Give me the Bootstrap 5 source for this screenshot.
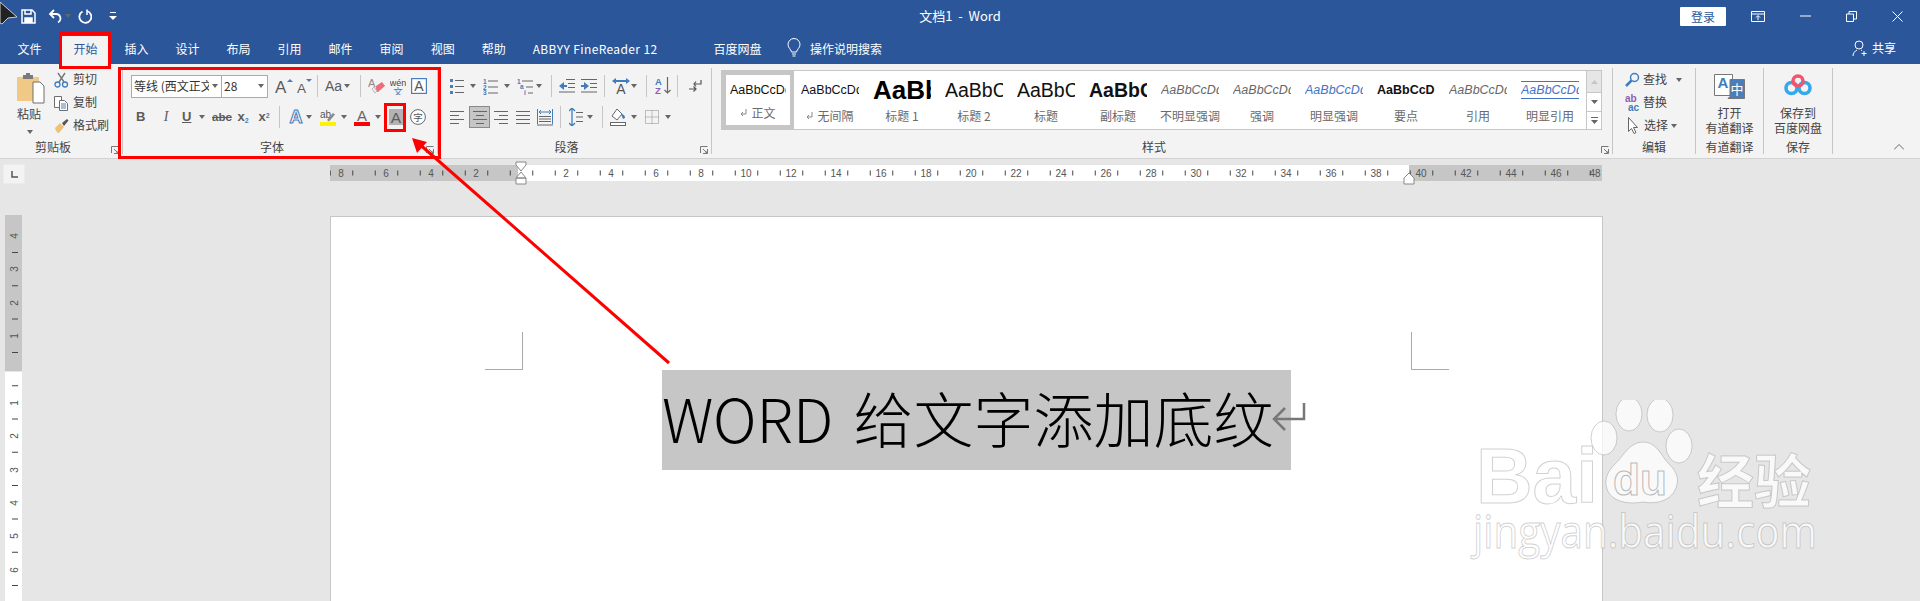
<!DOCTYPE html>
<html lang="zh-CN">
<head>
<meta charset="utf-8">
<title>文档1 - Word</title>
<link href="https://cdn.jsdelivr.net/npm/bootstrap@5.3.0/dist/css/bootstrap.min.css" rel="stylesheet">
<style>
html,body{height:601px;overflow:hidden}
body{background:#e6e6e6;font:12px/1.2 "Noto Sans CJK SC","Noto Sans",sans-serif;color:#444;position:relative}
svg{display:block;flex:none}
.title-bar{background:#2b579a;height:64px;color:#fff}
.t-row1{height:36px;padding-bottom:4px}
.t-side{flex:1 1 0}
.t-side-r{padding-left:21px}
.t-title{font-size:13px;white-space:pre;flex:none}
.qa{padding-left:21px}
.login{background:#fff;color:#2b579a;width:46px;height:19px;line-height:19px;text-align:center;border-radius:1px}
.ms-25{margin-left:25px}.ms-35{margin-left:35px}.me-17{margin-right:17px}
.t-row2{height:28px}
.tabs .nav-link{color:#fff;padding:0 13.5px;height:28px;line-height:25px;font-size:12px}
.tabs .nav-link.active{background:#f3f3f3;color:#2b579a;margin-left:5px}
.tabs .nav-link.search{height:24px;padding:0;margin:0}
.abbyy{letter-spacing:.38px}
.ms-baidu{margin-left:29px}
.ribbon{background:#f3f3f3;height:95px;border-bottom:1px solid #d2d2d2;padding-top:4px;color:#444}
.grp{height:86px;border-right:1px solid #c6c6c6;display:flex;flex-direction:column;flex:none}
.g1{width:123px}.g2{width:315px}.g3{width:274px}.g4{width:901px}.g5{width:83px}.g6{width:68px}.g7{width:69px}
.g-body{flex:1 1 auto;min-height:0}
.g-lab{display:flex;height:14px;line-height:14px;color:#444;flex:none}
.g-lab>b{flex:1 1 auto;text-align:center;font-weight:400}
.launch{width:16px;padding:6px 0 0 5px}
.row24{height:24px;display:flex;align-items:center}
.r1{margin-top:6px}.r2{margin-top:7px}
.pl8{padding-left:8px}.pl12{padding-left:12px}.pl13{padding-left:13px}
.m1{margin-left:1px}.m2{margin-left:2px}.m3{margin-left:3px}.m4{margin-left:4px}.m5{margin-left:5px}.m6{margin-left:6px}.m7{margin-left:7px}.m8{margin-left:8px}.m9{margin-left:9px}.m10{margin-left:10px}.m12{margin-left:12px}.m17{margin-left:17px}
.w8{width:8px}.w9{width:9px}.w10{width:10px}.w12{width:12px}.w14{width:14px}.w16{width:16px}.w18{width:18px}
.rb{flex:none;text-align:center;color:#5c5c5c;font-family:"Liberation Sans",sans-serif;line-height:16px;white-space:nowrap}
.rb-aa{font-size:14px}
.rb-b{font-weight:700;font-size:13px}
.rb-i{font-style:italic;font-size:14px;font-family:"Liberation Serif",serif}
.rb-s{text-decoration:line-through;font-size:11.5px;font-weight:700}
.rb-u{text-decoration:underline;font-size:13px;font-weight:700}
.rb sub,.rb sup{font-size:7px;color:#4a7ebb}
.cr{flex:none;display:flex;justify-content:center}
.cr::before{content:"";border:3px solid transparent;border-top:4px solid #666;border-bottom:0}
.vs{flex:none;width:1px;height:22px;background:#c6c6c6}
.cb{background:#fff;border:1px solid #ababab;height:23px;padding-left:2px;display:flex;align-items:center;flex:none;color:#333}
.cb1{width:91px}.cb2{width:46px;border-left:0}
.cb-text{flex:1 1 auto;overflow:hidden;white-space:nowrap}
.clip-col{padding-left:17px;width:51px}
.clip-paste{margin-top:5px}
.clip-txt{margin-top:2px}
.clip-cr{margin-top:9px}
.clip-list{margin-left:3px}
.clip-row{height:23px;display:flex;align-items:center;gap:4px;color:#444;white-space:nowrap}
.center-on{background:#c6c6c6;border:1px solid #8a8a8a;width:21px;height:22px;flex:none;display:flex;align-items:center;justify-content:center}
.gallery{margin:2px 0 0 9px;width:881px;height:60px;background:#fff;border:1px solid #c6c6c6;display:flex}
.st{width:72px;flex:none;display:flex;flex-direction:column;align-items:center;height:58px;color:#6a6a6a;border:4px solid transparent}
.st.sel{border-color:#c6c6c6}
.st-p{width:58px;height:30px;line-height:30px;overflow:hidden;white-space:nowrap;color:#111;font-family:"Liberation Sans",sans-serif;font-size:12.5px;text-align:left}
.sel .st-p{width:56px}
.st-l{height:18px;line-height:18px;margin-top:3px;display:flex;align-items:center;gap:4px}
.sel .st-l{margin-top:-1px}
.p-b{font-weight:700}.p-i{font-style:italic;color:#666;font-size:12.5px}.p-blue{color:#4472c4}
.p-h1{font-size:26px;font-weight:700;color:#000}.p-h2{font-size:19.5px}
.p-q{border-top:1px solid #4472c4;border-bottom:1px solid #4472c4;line-height:17px;height:19px;margin-top:6px;margin-bottom:5px}
.scroll{width:15px;flex:none;display:flex;flex-direction:column;border-left:1px solid #c6c6c6}
.scroll span{flex:1 1 0;display:flex;align-items:center;justify-content:center;background:#fff;border-bottom:1px solid #c6c6c6}
.scroll span:first-child{background:#e6e6e6;flex:1.2 1 0}
.scroll span:last-child{border:0}
.edit-col{padding-left:12px}
.edit-row{height:23px;display:flex;align-items:center;white-space:nowrap}
.big{display:flex;flex-direction:column;align-items:center;padding-top:6px;line-height:15px}
.big svg{margin-bottom:6px}
.ruler-row{display:flex;padding-left:3px;height:26px;margin-top:2px}
.corner{width:22px;height:20px;background:#f3f3f3;border:1px solid #ececec;margin-top:3px;flex:none;display:flex;align-items:center;justify-content:center}
.ruler-svg{margin-left:305px}
.doc-row{display:flex;padding-left:5px;margin-top:28px;height:386px}
.page{margin-left:308px;margin-top:1px;width:1273px;height:386px;background:#fff;border:1px solid #c6c6c6;border-bottom:0;padding-top:115px;flex:none}
.crops{display:flex;padding:0 153px 0 154px;height:38px}
.crop{width:38px;height:38px;flex:none;border-bottom:1px solid #aaa}
.crop.l{border-right:1px solid #aaa}
.crop.r{border-left:1px solid #aaa}
.hl{margin-left:331px;width:629px;height:100px;background:#c6c6c6;color:#000;font-size:60px;word-spacing:7px;line-height:94px;font-weight:300;white-space:nowrap;position:relative;font-family:"Noto Sans CJK SC","Noto Sans",sans-serif}
.pmark{position:absolute;left:610px;top:33px}
.overlay{position:absolute;pointer-events:none}
.box{border:3px solid #f00}
.b-tab{left:59px;top:32px;width:52px;height:37px}
.b-font{left:118px;top:67px;width:323px;height:92px}
.b-shade{left:384px;top:103px;width:22px;height:29px}
.arrow,.cursor{left:0;top:0}
.wm{left:1470px;top:400px}
</style>
</head>
<body>
<header class="title-bar">
  <div class="t-row1 d-flex align-items-center">
    <div class="t-side d-flex align-items-center qa">
      <svg width="15" height="15" viewBox="0 0 15 15" fill="none" stroke="#fff" stroke-width="1.5"><path d="M1 1h10l3 3v10H1z"/><path d="M4 1v4h6V1"/><path d="M4 14V9h7v5" fill="#fff"/></svg>
      <svg class="m12" width="14" height="15" viewBox="0 0 14 15" fill="none" stroke="#fff" stroke-width="1.8"><path d="M6 1 2 5l4 4M2 5h6a4.5 4.5 0 0 1 2 8.5"/></svg>
      <span class="cr w8 m2"></span>
      <svg class="m6" width="14" height="15" viewBox="0 0 14 15" fill="none" stroke="#fff" stroke-width="1.8"><path d="M4.5 2.5A6 6 0 1 0 9 2"/><path d="M9 .5V6" stroke-width="1.5"/></svg>
      <svg class="m17" width="8" height="9" viewBox="0 0 8 9" fill="#fff"><path d="M1 0h6v1H1zM0 4h8L4 8z"/></svg>
    </div>
    <div class="t-title">文档1  -  Word</div>
    <div class="t-side t-side-r d-flex align-items-center justify-content-end">
      <span class="login">登录</span>
      <svg class="ms-25" width="14" height="11" viewBox="0 0 14 11" fill="none" stroke="#fff"><path d="M.5.500h13v10H.5zM.5 3h13M7 9V5M5 6.500 7 4.500l2 2"/></svg>
      <svg class="ms-35" width="11" height="3" viewBox="0 0 11 3"><path d="M0 1h11" stroke="#fff"/></svg>
      <svg class="ms-35" width="11" height="11" viewBox="0 0 11 11" fill="none" stroke="#fff"><path d="M.5 3h7v7.500h-7zM3 3V.5h7.500V8H8"/></svg>
      <svg class="ms-35 me-17" width="11" height="11" viewBox="0 0 11 11" stroke="#fff"><path d="m.5.500 10 10m0-10-10 10"/></svg>
    </div>
  </div>
  <div class="t-row2 d-flex align-items-start">
    <nav class="nav tabs ps-1 flex-nowrap">
      <a class="nav-link" href="#">文件</a>
      <a class="nav-link active" href="#">开始</a>
      <a class="nav-link" href="#">插入</a>
      <a class="nav-link" href="#">设计</a>
      <a class="nav-link" href="#">布局</a>
      <a class="nav-link" href="#">引用</a>
      <a class="nav-link" href="#">邮件</a>
      <a class="nav-link" href="#">审阅</a>
      <a class="nav-link" href="#">视图</a>
      <a class="nav-link" href="#">帮助</a>
      <a class="nav-link abbyy" href="#">ABBYY FineReader 12</a>
      <a class="nav-link ms-baidu" href="#">百度网盘</a>
      <a class="nav-link search d-flex align-items-center gap-2" href="#"><svg class="m12" width="14" height="20" viewBox="0 0 14 20" fill="none" stroke="#fff"><path d="M4.500 14C4 11 1 10 1 6.500a6 6 0 0 1 12 0C13 10 10 11 9.500 14zM5 16h4M5.500 18h3"/></svg><span class="m1">操作说明搜索</span></a>
    </nav>
    <div class="ms-auto d-flex align-items-center me-4 gap-1 pt-1">
      <svg width="16" height="17" viewBox="0 0 16 17" fill="none" stroke="#fff"><circle cx="7" cy="5" r="4"/><path d="M1 16c0-3 2-5 4-6M9 10l1 .5M12 11v5M9.500 13.500h5"/></svg><span>共享</span>
    </div>
  </div>
</header>

<section class="ribbon d-flex">
  <div class="grp g1">
    <div class="g-body d-flex">
      <div class="clip-col d-flex flex-column">
        <svg class="clip-paste" width="28" height="32" viewBox="0 0 28 32"><path d="M0 4h22v24H0z" fill="#f0c987"/><path d="M6 2h10v4H6z" fill="#7a7a7a"/><path d="M9 0h4v3H9z" fill="#7a7a7a"/><path d="M16 9h7l4 4v17H16z" fill="#fff" stroke="#6e6e6e"/></svg>
        <div class="clip-txt">粘贴</div>
        <span class="cr w16 m5 clip-cr"></span>
      </div>
      <div class="d-flex flex-column clip-list">
        <div class="clip-row"><svg width="15" height="16" viewBox="0 0 15 16" fill="none"><path d="M4 1l6 9M11 1l-6 9" stroke="#777" stroke-width="1.400"/><circle cx="3.500" cy="12.500" r="2.500" stroke="#3f7dbd" stroke-width="1.300"/><circle cx="11" cy="12.500" r="2.500" stroke="#3f7dbd" stroke-width="1.300"/></svg>剪切</div>
        <div class="clip-row"><svg width="15" height="16" viewBox="0 0 15 16" fill="#fff" stroke="#6e6e6e"><path d="M.5 1.500h7v11h-7z"/><path d="M5.500 5.500h5l3 3v7h-8z"/><path d="M7 9h5M7 11h5M7 13h5" stroke="#4a7ebb"/></svg>复制</div>
        <div class="clip-row"><svg width="15" height="16" viewBox="0 0 15 16"><path d="M1 10l5-5 4 4-5 6c-2 0-3-2-4-5z" fill="#edc179"/><path d="M8 5l5-4 1.500 1.500L10 8z" fill="#555"/></svg>格式刷</div>
      </div>
    </div>
    <div class="g-lab"><b>剪贴板</b><span class="launch"><svg width="8" height="8" viewBox="0 0 8 8" fill="none" stroke="#777"><path d="M.5 7V.5H7.500M7.500 3v4.500H3M3 3l4 4M5 7h2V5"/></svg></span></div>
  </div>

  <div class="grp g2">
    <div class="g-body">
      <div class="row24 r1 pl8">
        <div class="cb cb1"><span class="cb-text">等线 (西文正文)</span><span class="cr w12"></span></div>
        <div class="cb cb2"><span class="cb-text">28</span><span class="cr w12"></span></div>
        <svg class="m7" width="19" height="16" viewBox="0 0 19 16"><text x="0" y="15" font-family="Liberation Sans" font-size="17" fill="#5c5c5c">A</text><path d="M12 4l3-3 3 3z" fill="#4a7ebb"/></svg>
        <svg class="m3" width="15" height="16" viewBox="0 0 15 16"><text x="0" y="15" font-family="Liberation Sans" font-size="13.500" fill="#5c5c5c">A</text><path d="M9 1h6l-3 3z" fill="#4a7ebb"/></svg>
        <span class="vs m5"></span>
        <span class="rb rb-aa m7 w16">Aa</span><span class="cr w12"></span>
        <span class="vs m7"></span>
        <svg class="m7" width="17" height="17" viewBox="0 0 17 17"><path d="M8 8l6-4 3 4-7 6H7z" fill="#ed6d78"/><path d="M6 9l3 4-2 2-3-4z" fill="#eee" stroke="#bbb"/><text x="0" y="9" font-family="Liberation Sans" font-size="11" fill="#888">A</text></svg>
        <svg class="m5" width="16" height="17" viewBox="0 0 16 17"><text x="8" y="8" text-anchor="middle" font-family="Liberation Sans" font-size="9" fill="#444">wén</text><text x="8" y="17" text-anchor="middle" font-family="Noto Sans CJK SC" font-size="9.500" fill="#3f7dbd">文</text></svg>
        <svg class="m5" width="16" height="16" viewBox="0 0 16 16"><rect x=".6" y=".6" width="14.800" height="14.800" fill="#fff" stroke="#4a7ebb" stroke-width="1.200"/><text x="8" y="13" text-anchor="middle" font-family="Liberation Sans" font-size="14" fill="#555">A</text></svg>
      </div>
      <div class="row24 r2 pl13">
        <span class="rb rb-b w9">B</span>
        <span class="rb rb-i w8 m17">I</span>
        <span class="rb rb-u w9 m12">U</span><span class="cr w12 m5"></span>
        <span class="rb rb-s w16 m4">abc</span>
        <span class="rb rb-b w14 m8">x<sub>2</sub></span>
        <span class="rb rb-b w12 m8">x<sup>2</sup></span>
        <span class="vs m9"></span>
        <svg class="m8" width="16" height="18" viewBox="0 0 16 18"><text x="8" y="15" text-anchor="middle" font-family="Liberation Sans" font-weight="700" font-size="18" fill="#fff" stroke="#4a7ebb" stroke-width="1.100">A</text></svg><span class="cr w10"></span>
        <svg class="m6" width="16" height="17" viewBox="0 0 16 17"><text x="0" y="9" font-family="Liberation Sans" font-size="10" fill="#555">ab</text><path d="M7 11l6-7 2 1.500-6 7z" fill="#8a8a8a"/><path d="M0 13h16v4H0z" fill="#fff200"/></svg><span class="cr w16"></span>
        <svg class="m2" width="16" height="18" viewBox="0 0 16 18"><text x="8" y="12.500" text-anchor="middle" font-family="Liberation Sans" font-size="15" fill="#666">A</text><path d="M0 14h16v4H0z" fill="#f00"/></svg><span class="cr w16"></span>
        <svg class="m3" width="14" height="16" viewBox="0 0 14 16"><rect width="14" height="16" fill="#b3b3b3"/><text x="7" y="13.500" text-anchor="middle" font-family="Liberation Sans" font-size="15.500" fill="#5c5c5c">A</text></svg>
        <svg class="m7" width="16" height="16" viewBox="0 0 16 16"><circle cx="8" cy="8" r="7.400" fill="#fff" stroke="#666"/><text x="8" y="11.500" text-anchor="middle" font-family="Noto Sans CJK SC" font-size="9.500" fill="#555">字</text></svg>
      </div>
    </div>
    <div class="g-lab"><b>字体</b><span class="launch"><svg width="8" height="8" viewBox="0 0 8 8" fill="none" stroke="#777"><path d="M.5 7V.5H7.500M7.500 3v4.500H3M3 3l4 4M5 7h2V5"/></svg></span></div>
  </div>

  <div class="grp g3">
    <div class="g-body">
      <div class="row24 r1 pl12">
        <svg width="14" height="16" viewBox="0 0 14 16"><path d="M0 1h3v3H0zM0 7h3v3H0zM0 13h3v3H0z" fill="#4a7ebb"/><path d="M5 2.500h9M5 8.500h9M5 14.500h9" stroke="#666"/></svg><span class="cr w18"></span>
        <svg class="m1" width="15" height="17" viewBox="0 0 15 17"><g font-family="Liberation Sans" font-size="6.500" font-weight="700" fill="#3f7dbd"><text x="0" y="5.500">1</text><text x="0" y="11.500">2</text><text x="0" y="17">3</text></g><path d="M5 3h10M5 9h10M5 15h10" stroke="#666"/></svg><span class="cr w18"></span>
        <svg class="m1" width="16" height="17" viewBox="0 0 16 17"><g font-family="Liberation Sans" font-size="6.500" font-weight="700" fill="#3f7dbd"><text x="0" y="5.500">1</text><text x="3" y="11">a</text><text x="7" y="17">i</text></g><path d="M5 3h11M9 9h7M11 15h5" stroke="#666"/></svg><span class="cr w12"></span>
        <span class="vs m6"></span>
        <svg class="m7" width="16" height="14" viewBox="0 0 16 14"><path d="M0 7l5-4v3h3v2H5v3z" fill="#3f7dbd"/><path d="M7 .5h9M9 4.500h7M9 8.500h7M0 13h16" stroke="#666"/></svg>
        <svg class="m6" width="16" height="14" viewBox="0 0 16 14"><path d="M8 7 3 3v3H0v2h3v3z" fill="#3f7dbd"/><path d="M0 .5h16M9 4.500h7M9 8.500h7M0 13h16" stroke="#666"/></svg>
        <span class="vs m7"></span>
        <svg class="m7" width="18" height="16" viewBox="0 0 18 16"><text x="9" y="16" text-anchor="middle" font-family="Liberation Sans" font-size="14" fill="#555">A</text><path d="M0 3l4-3v2h10V0l4 3-4 3V4H4v2z" fill="#3f7dbd"/></svg><span class="cr w8"></span>
        <span class="vs m8"></span>
        <svg class="m8" width="17" height="18" viewBox="0 0 17 18"><text x="0" y="8" font-family="Liberation Sans" font-weight="700" font-size="9.500" fill="#3f7dbd">A</text><text x="0" y="17" font-family="Liberation Sans" font-weight="700" font-size="9.500" fill="#8e5fb0">Z</text><path d="M12.500 0v16M9.500 13l3 3 3-3" fill="none" stroke="#666" stroke-width="1.200"/></svg>
        <span class="vs m5"></span>
        <svg class="m10" width="14" height="14" viewBox="0 0 14 14" fill="none" stroke="#555" stroke-width="1.200"><path d="M13 1v4H6M8 2.500 6 5l2 2.500M1 10h7M5.500 7.500 8 10l-2.500 2.500"/></svg>
      </div>
      <div class="row24 r2 pl12">
        <svg width="14" height="13" viewBox="0 0 14 13" stroke="#666"><path d="M0 .5h14M0 4.500h9M0 8.500h14M0 12.500h9"/></svg>
        <span class="center-on m5"><svg width="14" height="13" viewBox="0 0 14 13" stroke="#666"><path d="M0 .5h14M3 4.500h8M0 8.500h14M3 12.500h8"/></svg></span>
        <svg class="m4" width="14" height="13" viewBox="0 0 14 13" stroke="#666"><path d="M0 .5h14M5 4.500h9M0 8.500h14M5 12.500h9"/></svg>
        <svg class="m8" width="14" height="13" viewBox="0 0 14 13" stroke="#666"><path d="M0 .5h14M0 4.500h14M0 8.500h14M0 12.500h14"/></svg>
        <svg class="m7" width="16" height="17" viewBox="0 0 16 17" fill="none"><path d="M.5 0v15M15.500 0v15" stroke="#3f7dbd"/><path d="M2 3h12M4 1 2 3l2 2M12 1l2 2-2 2" stroke="#3f7dbd"/><path d="M2 7.500h12M2 10h12M2 12.500h12M0 16h16" stroke="#666"/></svg>
        <span class="vs m7"></span>
        <svg class="m8" width="14" height="18" viewBox="0 0 14 18" fill="none"><path d="M3 0v18M0 3l3-3 3 3M0 15l3 3 3-3" stroke="#3f7dbd" stroke-width="1.300"/><path d="M7 4.500h7M7 9h7M7 13.500h7" stroke="#666"/></svg><span class="cr w14"></span>
        <span class="vs m5"></span>
        <svg class="m7" width="16" height="18" viewBox="0 0 16 18"><path d="M7 1l5 5-5 6-5-4z" fill="#fff" stroke="#666"/><path d="M11 6c2 0 4 1 4 4l-2 1z" fill="#3f7dbd"/><rect x=".5" y="14.500" width="15" height="3" fill="#fff" stroke="#666"/></svg><span class="cr w16"></span>
        <svg class="m3" width="14" height="14" viewBox="0 0 14 14" fill="none" stroke="#888" stroke-dasharray="1 1"><path d="M.5.500h13v13H.5zM7 .5v13M.5 7h13"/></svg><span class="cr w18"></span>
      </div>
    </div>
    <div class="g-lab"><b>段落</b><span class="launch"><svg width="8" height="8" viewBox="0 0 8 8" fill="none" stroke="#777"><path d="M.5 7V.5H7.500M7.500 3v4.500H3M3 3l4 4M5 7h2V5"/></svg></span></div>
  </div>

  <div class="grp g4">
    <div class="g-body">
      <div class="gallery">
        <div class="st sel"><div class="st-p">AaBbCcDd</div><div class="st-l"><svg width="7" height="9" viewBox="0 0 7 9" fill="none" stroke="#888"><path d="M6 0v5H1M3 3 1 5l2 2"/></svg>正文</div></div>
        <div class="st"><div class="st-p">AaBbCcDd</div><div class="st-l"><svg width="7" height="9" viewBox="0 0 7 9" fill="none" stroke="#888"><path d="M6 0v5H1M3 3 1 5l2 2"/></svg>无间隔</div></div>
        <div class="st"><div class="st-p p-h1">AaBb</div><div class="st-l">标题 1</div></div>
        <div class="st"><div class="st-p p-h2">AaBbC</div><div class="st-l">标题 2</div></div>
        <div class="st"><div class="st-p p-h2">AaBbC</div><div class="st-l">标题</div></div>
        <div class="st"><div class="st-p p-h2 p-b">AaBbC</div><div class="st-l">副标题</div></div>
        <div class="st"><div class="st-p p-i">AaBbCcDd</div><div class="st-l">不明显强调</div></div>
        <div class="st"><div class="st-p p-i">AaBbCcDd</div><div class="st-l">强调</div></div>
        <div class="st"><div class="st-p p-i p-blue">AaBbCcDd</div><div class="st-l">明显强调</div></div>
        <div class="st"><div class="st-p p-b">AaBbCcDd</div><div class="st-l">要点</div></div>
        <div class="st"><div class="st-p p-i">AaBbCcDd</div><div class="st-l">引用</div></div>
        <div class="st"><div class="st-p p-i p-blue p-q">AaBbCcDd</div><div class="st-l">明显引用</div></div>
        <div class="scroll">
          <span><svg width="7" height="4" viewBox="0 0 7 4"><path d="M0 4l3.500-4L7 4z" fill="#c6c6c6"/></svg></span>
          <span><svg width="7" height="4" viewBox="0 0 7 4"><path d="M0 0l3.500 4L7 0z" fill="#666"/></svg></span>
          <span><svg width="7" height="7" viewBox="0 0 7 7"><path d="M0 .5h7" stroke="#666"/><path d="M0 3l3.500 4L7 3z" fill="#666"/></svg></span>
        </div>
      </div>
    </div>
    <div class="g-lab"><b>样式</b><span class="launch"><svg width="8" height="8" viewBox="0 0 8 8" fill="none" stroke="#777"><path d="M.5 7V.5H7.500M7.500 3v4.500H3M3 3l4 4M5 7h2V5"/></svg></span></div>
  </div>

  <div class="grp g5">
    <div class="g-body edit-col">
      <div class="edit-row"><svg width="15" height="16" viewBox="0 0 15 16" fill="none" stroke="#3f7dbd"><circle cx="9.500" cy="5.500" r="4" stroke-width="1.500"/><path d="M6.500 8.500 1 14" stroke-width="2.500"/></svg><span class="m3">查找</span><span class="cr w16 m4"></span></div>
      <div class="edit-row"><svg width="15" height="17" viewBox="0 0 15 17"><text x="0" y="8" font-family="Liberation Sans" font-weight="700" font-size="10" fill="#8e5fb0">ab</text><text x="3" y="16.500" font-family="Liberation Sans" font-weight="700" font-size="10" fill="#3f7dbd">ac</text></svg><span class="m3">替换</span></div>
      <div class="edit-row"><svg class="m3" width="10" height="17" viewBox="0 0 10 17"><path d="M.5.500v14l3-3 2.500 5 2-1-2.500-5h4z" fill="#fff" stroke="#666"/></svg><span class="m6">选择</span><span class="cr w12"></span></div>
    </div>
    <div class="g-lab"><b>编辑</b></div>
  </div>

  <div class="grp g6">
    <div class="g-body big">
      <svg width="31" height="25" viewBox="0 0 31 25"><path d="M.5.500h18v21H.5z" fill="#fff" stroke="#777"/><path d="M16 5.500h14.500v19H14l2-2z" fill="#4a7ebb" stroke="#777"/><text x="9" y="14" text-anchor="middle" font-family="Liberation Sans" font-weight="700" font-size="15" fill="#3f7dbd">A</text><text x="23" y="20" text-anchor="middle" font-family="Noto Sans CJK SC" font-size="13" fill="#fff">中</text></svg>
      <div>打开</div><div>有道翻译</div>
    </div>
    <div class="g-lab"><b>有道翻译</b></div>
  </div>

  <div class="grp g7">
    <div class="g-body big">
      <svg width="28" height="25" viewBox="0 0 28 25" fill="none" stroke-width="3.600"><circle cx="7.500" cy="14" r="5.500" stroke="#35a8ee"/><circle cx="20.500" cy="14" r="5.500" stroke="#35a8ee"/><circle cx="14" cy="7" r="5" stroke="#f2566f"/></svg>
      <div>保存到</div><div>百度网盘</div>
    </div>
    <div class="g-lab"><b>保存</b></div>
  </div>

  <div class="flex-grow-1 d-flex justify-content-end align-items-end">
    <svg class="mb-2 me-3" width="10" height="6" viewBox="0 0 10 6" fill="none" stroke="#666"><path d="M0 5.500 5 .5l5 5"/></svg>
  </div>
</section>

<main>
  <div class="ruler-row">
    <div class="corner"><svg width="7" height="7" viewBox="0 0 7 7" fill="none" stroke="#555" stroke-width="1.500"><path d="M1 0v6h6"/></svg></div>
    <svg class="ruler-svg" width="1275" height="24" viewBox="0 0 1275 24">
      <rect x="0" y="4" width="188" height="16" fill="#c6c6c6"/>
      <rect x="188" y="4" width="891" height="16" fill="#fff"/>
      <rect x="1079" y="4" width="193" height="16" fill="#c6c6c6"/>
      <line x1="-.25" x2="1272" y1="12" y2="12" stroke="#444" stroke-width="5" stroke-dasharray="1 21.500"/>
      <g font-family="Liberation Sans" font-size="10" fill="#555" text-anchor="middle">
        <text x="11" y="15.500">8</text><text x="56" y="15.500">6</text><text x="101" y="15.500">4</text><text x="146" y="15.500">2</text>
        <text x="236" y="15.500">2</text><text x="281" y="15.500">4</text><text x="326" y="15.500">6</text><text x="371" y="15.500">8</text><text x="416" y="15.500">10</text><text x="461" y="15.500">12</text><text x="506" y="15.500">14</text><text x="551" y="15.500">16</text><text x="596" y="15.500">18</text><text x="641" y="15.500">20</text><text x="686" y="15.500">22</text><text x="731" y="15.500">24</text><text x="776" y="15.500">26</text><text x="821" y="15.500">28</text><text x="866" y="15.500">30</text><text x="911" y="15.500">32</text><text x="956" y="15.500">34</text><text x="1001" y="15.500">36</text><text x="1046" y="15.500">38</text><text x="1091" y="15.500">40</text><text x="1136" y="15.500">42</text><text x="1181" y="15.500">44</text><text x="1226" y="15.500">46</text><text x="1265" y="15.500">48</text>
      </g>
      <path d="M186 1h10v3l-5 6-5-6zM191 11l5 6H186zM186 17h10v6h-10z" fill="#fff" stroke="#888"/>
      <path d="M1074 23v-6l5-5 5 5v6z" fill="#fff" stroke="#888"/>
    </svg>
  </div>
  <div class="doc-row">
    <svg width="17" height="386" viewBox="0 0 17 386">
      <rect width="17" height="156" fill="#c6c6c6"/><rect y="157" width="17" height="229" fill="#fff"/>
      <line x1="10" x2="10" y1="37" y2="386" stroke="#444" stroke-width="6" stroke-dasharray="1 32.300"/>
      <g font-family="Liberation Sans" font-size="10" fill="#555" text-anchor="middle">
        <text transform="translate(13 21) rotate(-90)">4</text><text transform="translate(13 54) rotate(-90)">3</text><text transform="translate(13 88) rotate(-90)">2</text><text transform="translate(13 121) rotate(-90)">1</text>
        <text transform="translate(13 188) rotate(-90)">1</text><text transform="translate(13 221) rotate(-90)">2</text><text transform="translate(13 255) rotate(-90)">3</text><text transform="translate(13 288) rotate(-90)">4</text><text transform="translate(13 321) rotate(-90)">5</text><text transform="translate(13 355) rotate(-90)">6</text>
      </g>
    </svg>
    <div class="page">
      <div class="crops justify-content-between"><div class="crop l"></div><div class="crop r"></div></div>
      <div class="hl">WORD 给文字添加底纹<svg class="pmark" width="34" height="28" viewBox="0 0 34 28" fill="none" stroke="#777" stroke-width="2.500"><path d="M32 0v16H3M13 5 2 16l11 11"/></svg></div>
    </div>
  </div>
</main>

<div class="overlay box b-tab"></div>
<div class="overlay box b-font"></div>
<div class="overlay box b-shade"></div>
<svg class="overlay cursor" width="20" height="28" viewBox="0 0 20 28"><path d="M0 2 17 17 8 18 2 24 0 23z" fill="#222" stroke="#ccc"/></svg>
<svg class="overlay arrow" width="1920" height="601" viewBox="0 0 1920 601"><path d="M669 363 417 142" stroke="#f00" stroke-width="3"/><path d="M412 138l15 4-10 11z" fill="#f00"/></svg>

<svg class="overlay wm" width="350" height="165" viewBox="0 0 350 165">
  <g fill="#fff" fill-opacity=".75" stroke="#8c8c8c" stroke-opacity=".4">
    <text x="6" y="103" font-family="Liberation Sans" font-weight="700" font-size="78" textLength="122" lengthAdjust="spacingAndGlyphs">Bai</text>
    <ellipse cx="134" cy="38" rx="13" ry="17"/><ellipse cx="159" cy="14" rx="13" ry="17"/><ellipse cx="190" cy="15" rx="13" ry="17"/><ellipse cx="209" cy="46" rx="13" ry="17"/>
    <path d="M173 42c14 0 18 14 26 22 9 9 10 16 7 24-4 11-17 17-33 14-16 3-32-1-36-13-3-9 0-17 8-25 8-7 14-22 28-22z"/>
    <text x="227" y="103" font-family="Noto Sans CJK SC" font-weight="700" font-size="58" textLength="114" lengthAdjust="spacingAndGlyphs">经验</text>
    <text x="3" y="148" font-family="Open Sans" font-size="46" textLength="344" lengthAdjust="spacingAndGlyphs">jingyan.baidu.com</text>
  </g>
  <text x="143" y="95" font-family="Liberation Sans" font-weight="700" font-size="44" textLength="54" lengthAdjust="spacingAndGlyphs" fill="none" stroke="#8c8c8c" stroke-opacity=".6">du</text>
</svg>
<script src="https://cdn.jsdelivr.net/npm/bootstrap@5.3.0/dist/js/bootstrap.bundle.min.js"></script>
</body>
</html>
